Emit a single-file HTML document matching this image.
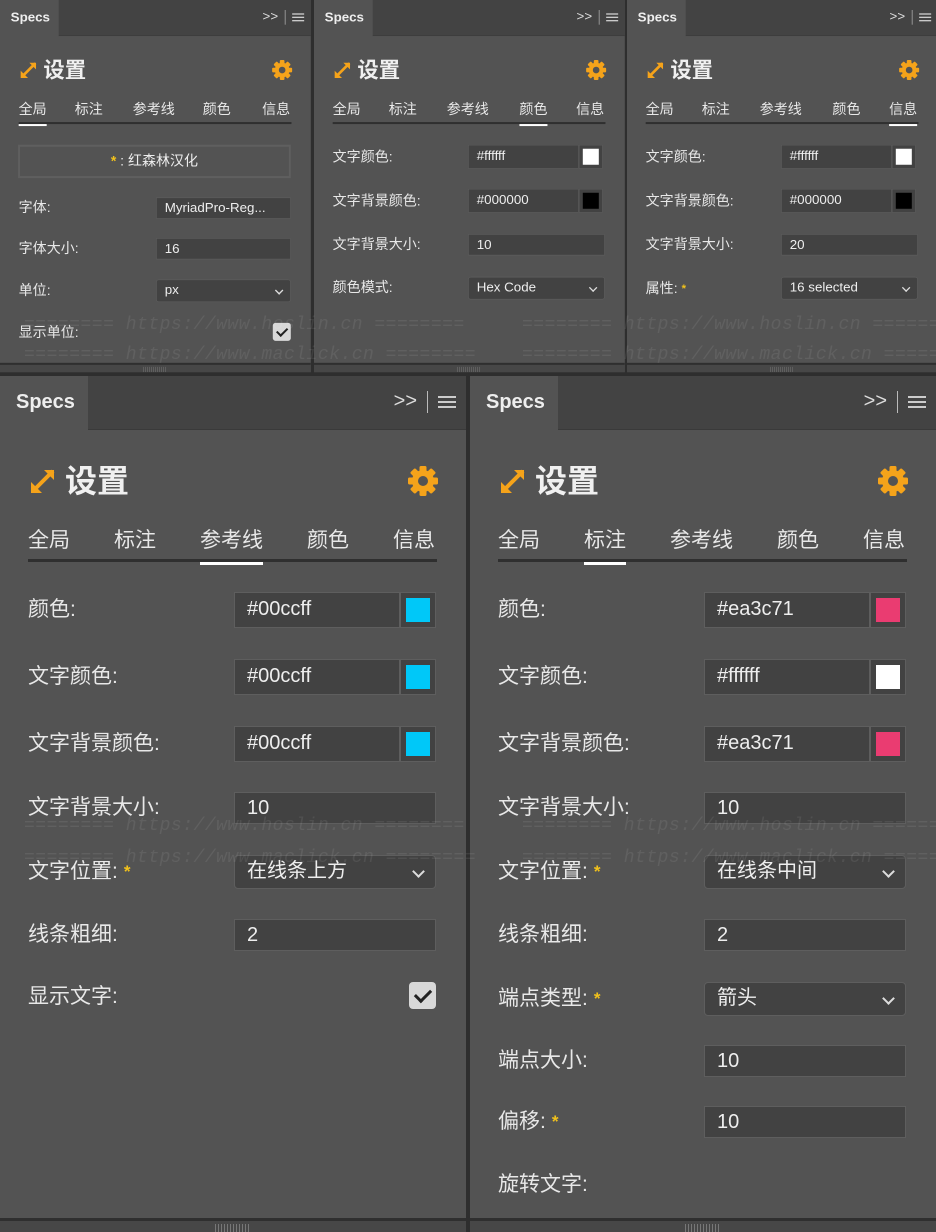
<!DOCTYPE html>
<html><head><meta charset="utf-8"><style>
*{margin:0;padding:0;box-sizing:border-box}
body{width:936px;height:1232px;background:#2e2e2e;position:relative;overflow:hidden;font-family:"Liberation Sans","Noto Sans CJK SC",sans-serif;color:#e6e6e6}
.p{position:absolute;width:466px;background:#535353;overflow:hidden}
.s{transform:scale(0.667);transform-origin:0 0}
.bar{position:absolute;left:0;top:0;width:100%;height:54px;background:#434343;border-bottom:1px solid #3a3a3a}
.tab{position:absolute;left:0;top:0;width:88px;height:55px;background:#535353;font-size:20px;font-weight:bold;color:#eee;padding:15px 0 0 16px}
.ctl{position:absolute;top:14px;right:10px;font-size:20px;color:#ddd;display:flex;align-items:center;gap:10px}
.ham{width:18px;height:12px;border-top:2px solid #ccc;border-bottom:2px solid #ccc;position:relative}
.ham:after{content:"";position:absolute;left:0;top:3px;width:18px;height:2px;background:#ccc}
.vb{width:1px;height:22px;background:#bbb}
.title{position:absolute;left:65px;top:84px;font-size:32px;font-weight:bold;color:#f0f0f0;line-height:42px}
.arrow{position:absolute;left:30px;top:92px}
.gear{position:absolute;left:407px;top:89px}
.tabs{position:absolute;left:28px;top:150px;width:409px;height:36px;border-bottom:3px solid #2f2f2f}
.tabs span{position:absolute;top:0;font-size:21px;color:#e8e8e8;line-height:30px}
.tabs span.a:after{content:"";position:absolute;left:0;right:0;bottom:-9px;height:3px;background:#fff}
.l{position:absolute;left:28px;font-size:21px;color:#e8e8e8;line-height:30px;white-space:nowrap}
.l b{color:#f2c21b;font-size:17px;vertical-align:top;margin-left:6px}
.in{position:absolute;left:234px;width:202px;height:32px;background:#424242;border:1px solid #5e5e5e;font-size:20px;color:#eee;padding-left:12px;line-height:30px;white-space:nowrap}
.tx{position:absolute;left:234px;width:166px;height:36px;background:#424242;border:1px solid #5e5e5e;font-size:20px;color:#eee;padding-left:12px;line-height:32px}
.sw{position:absolute;left:400px;width:36px;height:36px;background:#424242;border:1px solid #5e5e5e}
.sw i{position:absolute;left:5px;top:5px;width:24px;height:24px}
.sel{border-radius:4px;height:34px}
.sel:after{content:"";position:absolute;right:12px;top:11px;width:7px;height:7px;border-right:2px solid #ddd;border-bottom:2px solid #ddd;transform:rotate(45deg)}
.cb{position:absolute;left:409px;width:27px;height:27px;background:#d8d8d8;border-radius:4px}
.cb:after{content:"";position:absolute;left:9px;top:4px;width:7px;height:13px;border-right:3px solid #222;border-bottom:3px solid #222;transform:rotate(45deg)}
.foot{position:absolute;left:0;bottom:0;width:100%;height:14px;background:#474747;border-top:3px solid #2f2f2f}
.foot:after{content:"";position:absolute;left:50%;margin-left:-18px;top:3px;width:36px;height:8px;background:repeating-linear-gradient(90deg,#777 0 1px,transparent 1px 3px)}
.wm{position:absolute;font-family:"Liberation Mono",monospace;font-style:italic;font-size:18px;color:rgba(255,255,255,0.08);white-space:nowrap;letter-spacing:0.5px}
.star{position:absolute;left:27px;top:217px;width:409px;height:50px;border:3px solid #5f5f5f;background:#535353;text-align:center;font-size:21px;line-height:44px;color:#eee}
.star b{color:#f2c21b}
</style></head><body>

<div class="p s" style="left:0;top:0;height:558px">
 <div class="bar"></div><div class="tab">Specs</div>
 <div class="ctl"><span>&gt;&gt;</span><div class="vb"></div><div class="ham"></div></div>
 <svg class="arrow" width="26" height="26" viewBox="0 0 26 26"><path d="M3 23 L23 3" stroke="#f5a31a" stroke-width="4"/><path d="M14 2 H24 V12Z M1 14 V25 H12Z" fill="#f5a31a"/></svg>
 <div class="title">设置</div>
 <svg class="gear" width="32" height="32" viewBox="0 0 32 32"><g fill="#f5a31a"><circle cx="16" cy="16" r="11"/><rect x="12.5" y="1" width="7" height="30" rx="1.5"/><rect x="12.5" y="1" width="7" height="30" rx="1.5" transform="rotate(45 16 16)"/><rect x="12.5" y="1" width="7" height="30" rx="1.5" transform="rotate(90 16 16)"/><rect x="12.5" y="1" width="7" height="30" rx="1.5" transform="rotate(135 16 16)"/></g><circle cx="16" cy="16" r="5" fill="#535353"/></svg>
 <div class="tabs"><span class="a" style="left:0">全局</span><span style="left:84px">标注</span><span style="left:171px">参考线</span><span style="left:276px">颜色</span><span style="left:365px">信息</span></div>
 <div class="star"><b>*</b> : 红森林汉化</div>
 <div class="l" style="top:297px">字体:</div><div class="in" style="top:296px">MyriadPro-Reg...</div>
 <div class="l" style="top:358px">字体大小:</div><div class="in" style="top:357px">16</div>
 <div class="l" style="top:421px">单位:</div><div class="in sel" style="top:419px">px</div>
 <div class="l" style="top:484px">显示单位:</div><div class="cb" style="top:484px"></div>
 <div class="foot"></div>
</div>

<div class="p s" style="left:314px;top:0;height:558px">
 <div class="bar"></div><div class="tab">Specs</div>
 <div class="ctl"><span>&gt;&gt;</span><div class="vb"></div><div class="ham"></div></div>
 <svg class="arrow" width="26" height="26" viewBox="0 0 26 26"><path d="M3 23 L23 3" stroke="#f5a31a" stroke-width="4"/><path d="M14 2 H24 V12Z M1 14 V25 H12Z" fill="#f5a31a"/></svg>
 <div class="title">设置</div>
 <svg class="gear" width="32" height="32" viewBox="0 0 32 32"><g fill="#f5a31a"><circle cx="16" cy="16" r="11"/><rect x="12.5" y="1" width="7" height="30" rx="1.5"/><rect x="12.5" y="1" width="7" height="30" rx="1.5" transform="rotate(45 16 16)"/><rect x="12.5" y="1" width="7" height="30" rx="1.5" transform="rotate(90 16 16)"/><rect x="12.5" y="1" width="7" height="30" rx="1.5" transform="rotate(135 16 16)"/></g><circle cx="16" cy="16" r="5" fill="#535353"/></svg>
 <div class="tabs"><span style="left:0">全局</span><span style="left:84px">标注</span><span style="left:171px">参考线</span><span class="a" style="left:280px">颜色</span><span style="left:365px">信息</span></div>
 <div class="l" style="top:221px">文字颜色:</div><div class="tx" style="top:217px;left:231px">#ffffff</div><div class="sw" style="top:217px;left:397px"><i style="background:#fff"></i></div>
 <div class="l" style="top:287px">文字背景颜色:</div><div class="tx" style="top:283px;left:231px">#000000</div><div class="sw" style="top:283px;left:397px"><i style="background:#000"></i></div>
 <div class="l" style="top:352px">文字背景大小:</div><div class="in" style="top:351px;left:231px;width:205px">10</div>
 <div class="l" style="top:417px">颜色模式:</div><div class="in sel" style="top:415px;left:231px;width:205px">Hex Code</div>
 <div class="foot"></div>
</div>

<div class="p s" style="left:627px;top:0;height:558px">
 <div class="bar"></div><div class="tab">Specs</div>
 <div class="ctl"><span>&gt;&gt;</span><div class="vb"></div><div class="ham"></div></div>
 <svg class="arrow" width="26" height="26" viewBox="0 0 26 26"><path d="M3 23 L23 3" stroke="#f5a31a" stroke-width="4"/><path d="M14 2 H24 V12Z M1 14 V25 H12Z" fill="#f5a31a"/></svg>
 <div class="title">设置</div>
 <svg class="gear" width="32" height="32" viewBox="0 0 32 32"><g fill="#f5a31a"><circle cx="16" cy="16" r="11"/><rect x="12.5" y="1" width="7" height="30" rx="1.5"/><rect x="12.5" y="1" width="7" height="30" rx="1.5" transform="rotate(45 16 16)"/><rect x="12.5" y="1" width="7" height="30" rx="1.5" transform="rotate(90 16 16)"/><rect x="12.5" y="1" width="7" height="30" rx="1.5" transform="rotate(135 16 16)"/></g><circle cx="16" cy="16" r="5" fill="#535353"/></svg>
 <div class="tabs"><span style="left:0">全局</span><span style="left:84px">标注</span><span style="left:171px">参考线</span><span style="left:280px">颜色</span><span class="a" style="left:365px">信息</span></div>
 <div class="l" style="top:221px">文字颜色:</div><div class="tx" style="top:217px;left:231px">#ffffff</div><div class="sw" style="top:217px;left:397px"><i style="background:#fff"></i></div>
 <div class="l" style="top:287px">文字背景颜色:</div><div class="tx" style="top:283px;left:231px">#000000</div><div class="sw" style="top:283px;left:397px"><i style="background:#000"></i></div>
 <div class="l" style="top:352px">文字背景大小:</div><div class="in" style="top:351px;left:231px;width:205px">20</div>
 <div class="l" style="top:418px">属性:<b>*</b></div><div class="in sel" style="top:415px;left:231px;width:205px">16 selected</div>
 <div class="foot"></div>
</div>

<div class="p" style="left:0;top:376px;height:856px">
 <div class="bar"></div><div class="tab">Specs</div>
 <div class="ctl"><span>&gt;&gt;</span><div class="vb"></div><div class="ham"></div></div>
 <svg class="arrow" width="26" height="26" viewBox="0 0 26 26"><path d="M3 23 L23 3" stroke="#f5a31a" stroke-width="4"/><path d="M14 2 H24 V12Z M1 14 V25 H12Z" fill="#f5a31a"/></svg>
 <div class="title">设置</div>
 <svg class="gear" width="32" height="32" viewBox="0 0 32 32"><g fill="#f5a31a"><circle cx="16" cy="16" r="11"/><rect x="12.5" y="1" width="7" height="30" rx="1.5"/><rect x="12.5" y="1" width="7" height="30" rx="1.5" transform="rotate(45 16 16)"/><rect x="12.5" y="1" width="7" height="30" rx="1.5" transform="rotate(90 16 16)"/><rect x="12.5" y="1" width="7" height="30" rx="1.5" transform="rotate(135 16 16)"/></g><circle cx="16" cy="16" r="5" fill="#535353"/></svg>
 <div class="tabs"><span style="left:0">全局</span><span style="left:86px">标注</span><span class="a" style="left:172px">参考线</span><span style="left:279px">颜色</span><span style="left:365px">信息</span></div>
 <div class="l" style="top:219px">颜色:</div><div class="tx" style="top:216px">#00ccff</div><div class="sw" style="top:216px"><i style="background:#00c8f8"></i></div>
 <div class="l" style="top:286px">文字颜色:</div><div class="tx" style="top:283px">#00ccff</div><div class="sw" style="top:283px"><i style="background:#00c8f8"></i></div>
 <div class="l" style="top:353px">文字背景颜色:</div><div class="tx" style="top:350px">#00ccff</div><div class="sw" style="top:350px"><i style="background:#00c8f8"></i></div>
 <div class="l" style="top:417px">文字背景大小:</div><div class="in" style="top:416px">10</div>
 <div class="l" style="top:481px">文字位置:<b>*</b></div><div class="in sel" style="top:479px">在线条上方</div>
 <div class="l" style="top:544px">线条粗细:</div><div class="in" style="top:543px">2</div>
 <div class="l" style="top:606px">显示文字:</div><div class="cb" style="top:606px"></div>
 <div class="foot"></div>
</div>

<div class="p" style="left:470px;top:376px;height:856px">
 <div class="bar"></div><div class="tab">Specs</div>
 <div class="ctl"><span>&gt;&gt;</span><div class="vb"></div><div class="ham"></div></div>
 <svg class="arrow" width="26" height="26" viewBox="0 0 26 26"><path d="M3 23 L23 3" stroke="#f5a31a" stroke-width="4"/><path d="M14 2 H24 V12Z M1 14 V25 H12Z" fill="#f5a31a"/></svg>
 <div class="title">设置</div>
 <svg class="gear" width="32" height="32" viewBox="0 0 32 32"><g fill="#f5a31a"><circle cx="16" cy="16" r="11"/><rect x="12.5" y="1" width="7" height="30" rx="1.5"/><rect x="12.5" y="1" width="7" height="30" rx="1.5" transform="rotate(45 16 16)"/><rect x="12.5" y="1" width="7" height="30" rx="1.5" transform="rotate(90 16 16)"/><rect x="12.5" y="1" width="7" height="30" rx="1.5" transform="rotate(135 16 16)"/></g><circle cx="16" cy="16" r="5" fill="#535353"/></svg>
 <div class="tabs"><span style="left:0">全局</span><span class="a" style="left:86px">标注</span><span style="left:172px">参考线</span><span style="left:279px">颜色</span><span style="left:365px">信息</span></div>
 <div class="l" style="top:219px">颜色:</div><div class="tx" style="top:216px">#ea3c71</div><div class="sw" style="top:216px"><i style="background:#ea3c71"></i></div>
 <div class="l" style="top:286px">文字颜色:</div><div class="tx" style="top:283px">#ffffff</div><div class="sw" style="top:283px"><i style="background:#fff"></i></div>
 <div class="l" style="top:353px">文字背景颜色:</div><div class="tx" style="top:350px">#ea3c71</div><div class="sw" style="top:350px"><i style="background:#ea3c71"></i></div>
 <div class="l" style="top:417px">文字背景大小:</div><div class="in" style="top:416px">10</div>
 <div class="l" style="top:481px">文字位置:<b>*</b></div><div class="in sel" style="top:479px">在线条中间</div>
 <div class="l" style="top:544px">线条粗细:</div><div class="in" style="top:543px">2</div>
 <div class="l" style="top:608px">端点类型:<b>*</b></div><div class="in sel" style="top:606px">箭头</div>
 <div class="l" style="top:670px">端点大小:</div><div class="in" style="top:669px">10</div>
 <div class="l" style="top:731px">偏移:<b>*</b></div><div class="in" style="top:730px">10</div>
 <div class="l" style="top:794px">旋转文字:</div>
 <div class="foot"></div>
</div>

<div class="wm" style="left:24px;top:315px">======== https://www.hoslin.cn ========</div>
<div class="wm" style="left:522px;top:315px">======== https://www.hoslin.cn ========</div>
<div class="wm" style="left:24px;top:345px">======== https://www.maclick.cn ========</div>
<div class="wm" style="left:522px;top:345px">======== https://www.maclick.cn ========</div>
<div class="wm" style="left:24px;top:816px">======== https://www.hoslin.cn ========</div>
<div class="wm" style="left:522px;top:816px">======== https://www.hoslin.cn ========</div>
<div class="wm" style="left:24px;top:848px">======== https://www.maclick.cn ========</div>
<div class="wm" style="left:522px;top:848px">======== https://www.maclick.cn ========</div>
</body></html>
